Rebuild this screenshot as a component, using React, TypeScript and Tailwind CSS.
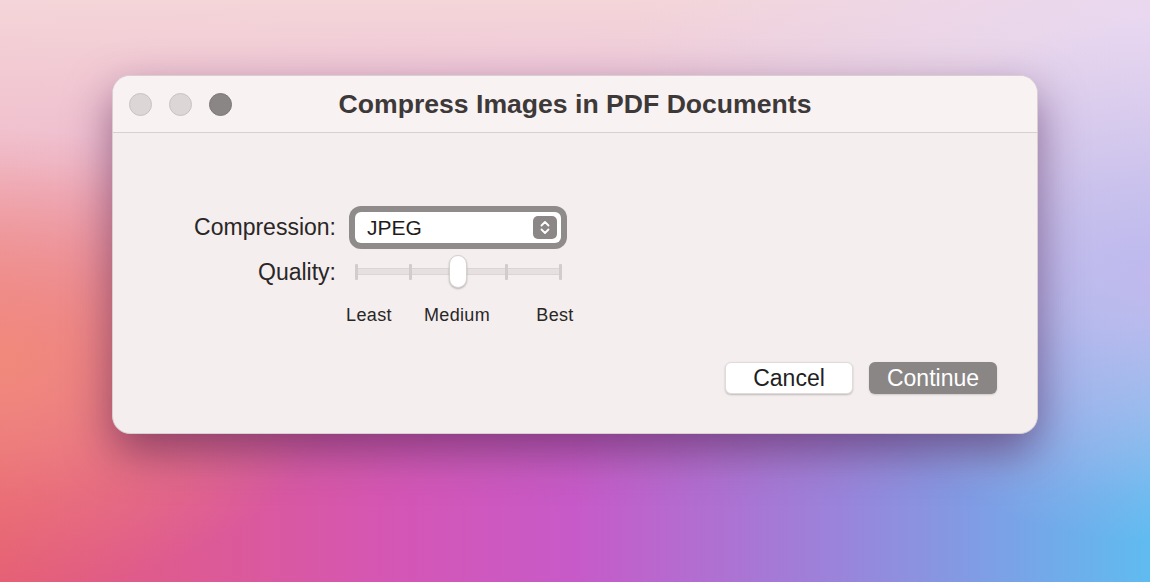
import React from 'react';

const font = { fontFamily: '"Liberation Sans", Arial, sans-serif' };

function TrafficLights() {
  return (
    <div className="flex items-center gap-[17px] pl-[16px]">
      <span className="h-[23px] w-[23px] rounded-full border border-[#c8c2c2] bg-[#dcd6d6]" />
      <span className="h-[23px] w-[23px] rounded-full border border-[#c8c2c2] bg-[#dcd6d6]" />
      <span className="h-[23px] w-[23px] rounded-full border border-[#7d7878] bg-[#8b8686]" />
    </div>
  );
}

function Stepper() {
  return (
    <div className="flex h-[23px] w-[24px] items-center justify-center rounded-[5px] bg-[#8b8787]">
      <svg width="12" height="17" viewBox="0 0 12 17" fill="none">
        <path d="M2.5 6.5 L6 3 L9.5 6.5" stroke="white" strokeWidth="1.8" strokeLinecap="round" strokeLinejoin="round" />
        <path d="M2.5 10.5 L6 14 L9.5 10.5" stroke="white" strokeWidth="1.8" strokeLinecap="round" strokeLinejoin="round" />
      </svg>
    </div>
  );
}

function Slider() {
  const ticks = [0, 54, 102, 150, 204];
  return (
    <div className="relative ml-[6px] h-[34px] w-[206px]">
      {/* track */}
      <div className="absolute left-0 right-0 top-[13px] h-[7px] rounded-[2px] border border-[#dcd5d5] bg-[#e6e0e0]" />
      {ticks.map((t) => (
        <div
          key={t}
          className="absolute top-[9px] h-[16px] w-[3px] rounded-[1px] bg-[#d2cccc]"
          style={{ left: t }}
        />
      ))}
      {/* knob */}
      <div className="absolute left-[94px] top-0 h-[33px] w-[18px] rounded-full border border-[#d6d0d0] bg-white shadow-[0_1px_2px_rgba(0,0,0,0.25)]" />
    </div>
  );
}

export default function App() {
  return (
    <div
      className="h-[582px] w-[1150px] overflow-hidden bg-[radial-gradient(ellipse_30%_40%_at_0%_62%,rgba(242,138,122,0.95)_0%,rgba(242,138,122,0)_100%),radial-gradient(ellipse_28%_45%_at_100%_48%,rgba(192,184,238,0.95)_0%,rgba(192,184,238,0)_100%),radial-gradient(ellipse_45%_55%_at_100%_5%,rgba(232,216,242,0.95)_0%,rgba(232,216,242,0)_100%),linear-gradient(180deg,#f4d5d8_0%,rgba(242,212,226,0.8)_28%,rgba(236,200,224,0.25)_62%,rgba(236,200,224,0)_85%),linear-gradient(90deg,#e55e74_0%,#d456b6_35%,#c75ac8_50%,#9c82da_72%,#5fbcf0_100%)] pl-[112px] pt-[75px]"
      style={font}
    >
      <div className="flex h-[359px] w-[926px] flex-col overflow-hidden rounded-[18px] border border-[#d9cfd3] bg-[#f4eeee] shadow-[0_18px_45px_rgba(70,20,70,0.55)]">
        {/* Title bar */}
        <div className="grid h-[57px] grid-cols-[1fr_auto_1fr] items-center border-b border-[#d6d0d0] bg-[#f8f2f2]">
          <TrafficLights />
          <div className="text-[26.6px] font-bold leading-none text-[#3d3939]">Compress Images in PDF Documents</div>
          <div />
        </div>

        {/* Body */}
        <div className="flex flex-1 flex-col pt-[73px]">
          <div className="flex h-[43px] items-center">
            <div className="w-[223px] text-right text-[23px] leading-none text-[#2a2626]">Compression:</div>
            <div className="ml-[13px] flex h-[43px] w-[218px] rounded-[12px] bg-[#8f8b8b] p-[6px]">
              <div className="flex flex-1 items-center justify-between rounded-[6px] bg-white pl-[12px] pr-[4px]">
                <span className="text-[21px] leading-none text-[#1f1b1b]">JPEG</span>
                <Stepper />
              </div>
            </div>
          </div>

          <div className="mt-[6px] flex h-[34px] items-center">
            <div className="w-[223px] text-right text-[23px] leading-none text-[#2a2626]">Quality:</div>
            <div className="ml-[13px]">
              <Slider />
            </div>
          </div>

          <div className="mt-[15px] flex h-[22px] items-center text-[18px] leading-none tracking-[0.02em] text-[#2a2626]">
            <div className="ml-[216px] w-[80px] text-center">Least</div>
            <div className="ml-[8px] w-[80px] text-center">Medium</div>
            <div className="ml-[18px] w-[80px] text-center">Best</div>
          </div>

          <div className="mt-[36px] flex justify-end gap-[16px] pr-[40px]">
            <button className="h-[32px] w-[128px] rounded-[6px] border border-[#e0dada] bg-white text-[23px] leading-none text-[#231f1f] shadow-[0_1px_2px_rgba(0,0,0,0.22)]">
              Cancel
            </button>
            <button className="h-[32px] w-[128px] rounded-[6px] bg-[#8a8686] text-[23px] leading-none text-white shadow-[0_1px_2px_rgba(0,0,0,0.15)]">
              Continue
            </button>
          </div>
        </div>
      </div>
    </div>
  );
}
